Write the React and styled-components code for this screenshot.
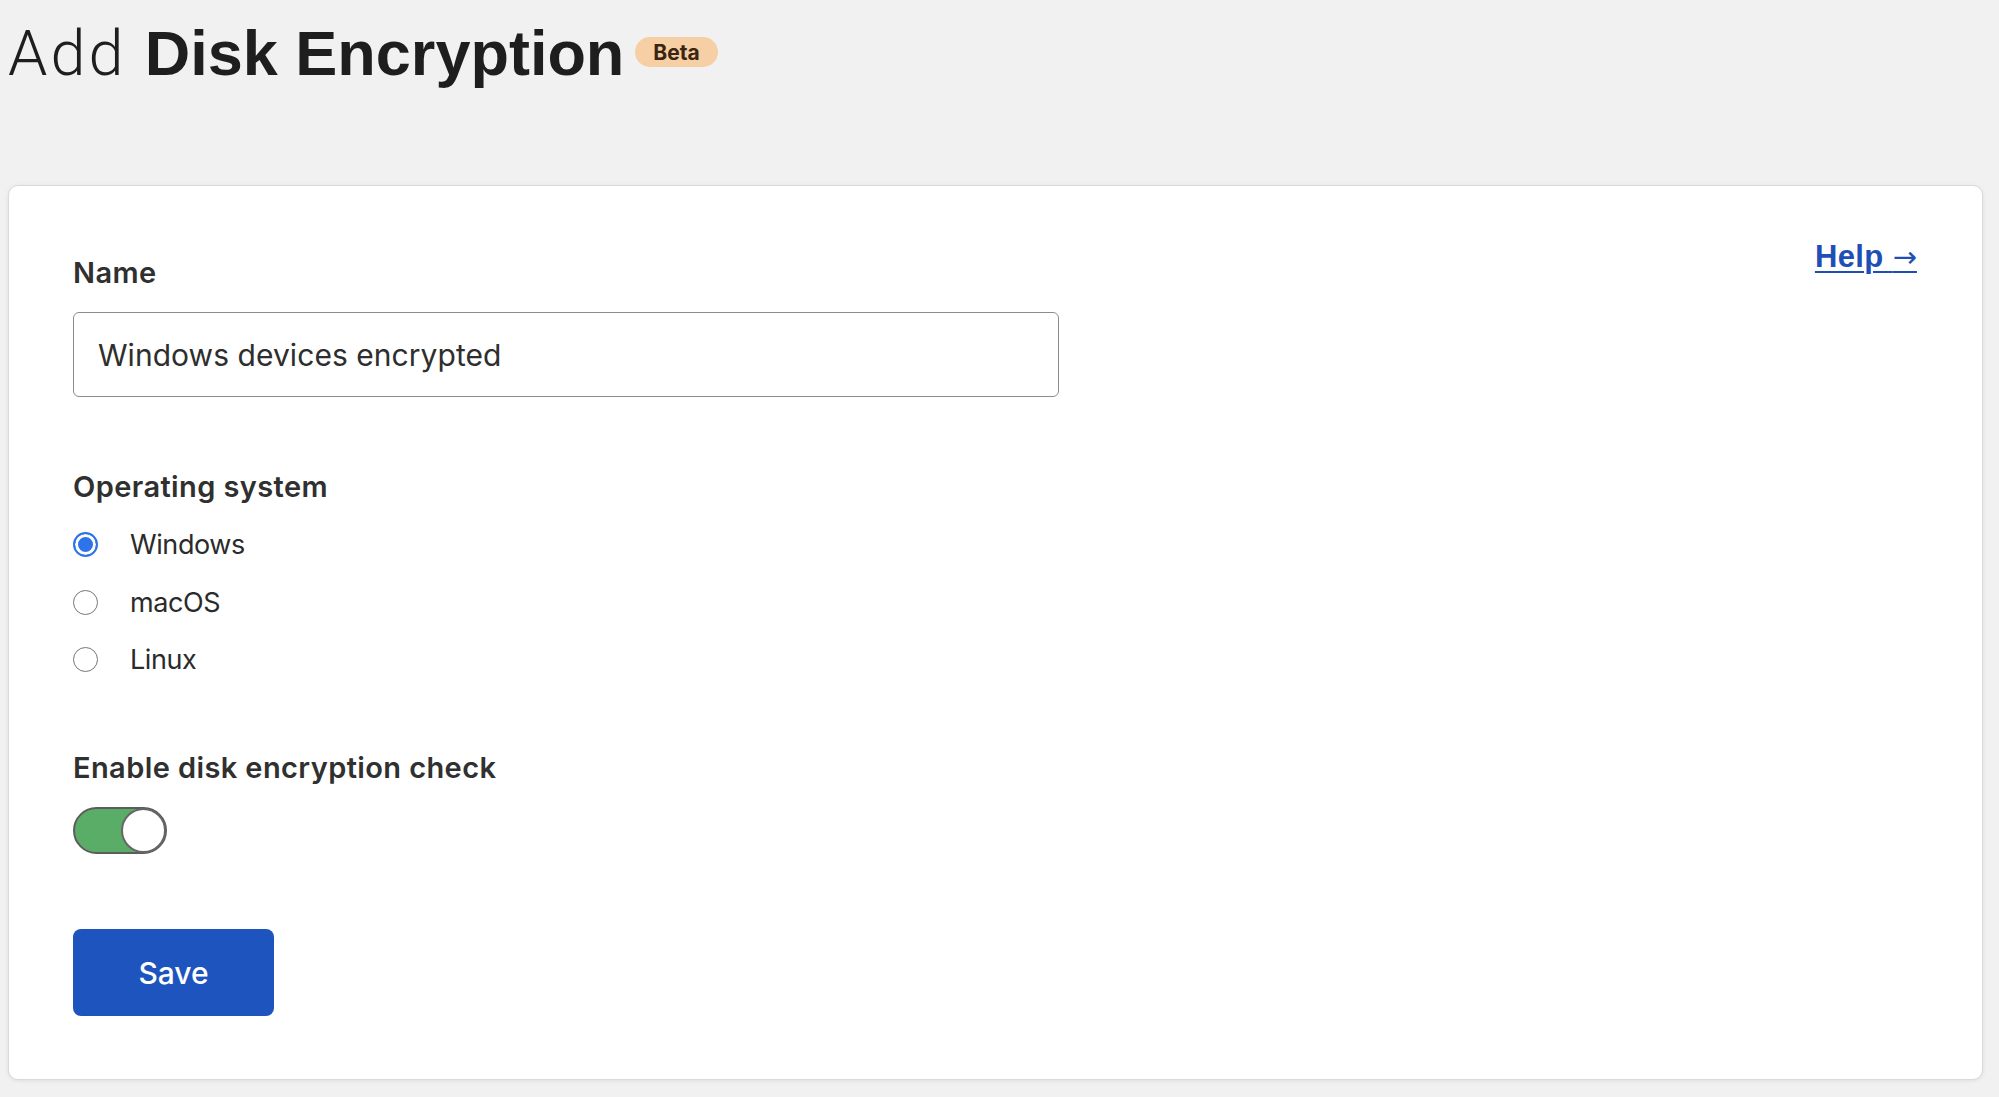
import React, { useState } from 'react';
import styled, { createGlobalStyle } from 'styled-components';

const GlobalStyle = createGlobalStyle`
  html, body {
    margin: 0;
    padding: 0;
    background: #f1f1f1;
  }
  body {
    font-family: Inter, "Noto Sans", sans-serif;
    color: #333;
  }
`;

const Page = styled.div`
  padding: 15px 16px 16px 8px;
`;

const Header = styled.header`
  display: flex;
  align-items: center;
  gap: 11px;
  height: 76px;
`;

const Title = styled.h1`
  margin: 0;
  font-size: 63px;
  line-height: 76px;
  color: #1e1e1e;
  font-weight: 400;
  white-space: nowrap;
`;

const Light = styled.span`
  font-family: Roboto, "Liberation Sans", sans-serif;
  font-weight: 300;
  letter-spacing: 3px;
`;

const Strong = styled.span`
  font-family: "Liberation Sans", Arial, sans-serif;
  font-weight: 700;
`;

const Badge = styled.span`
  display: inline-flex;
  align-items: center;
  justify-content: center;
  height: 30px;
  padding: 0 18px;
  margin-top: -2px;
  border-radius: 15px;
  background: #f6cfa4;
  color: #3b2410;
  font-family: Inter, sans-serif;
  font-weight: 700;
  font-size: 21px;
`;

const Card = styled.section`
  margin-top: 94px;
  background: #fff;
  border: 1px solid #dadada;
  border-radius: 10px;
  box-shadow: 0 1px 4px rgba(0, 0, 0, 0.08);
  padding: 55px 65px 63px 64px;
  display: flex;
  align-items: flex-start;
  justify-content: space-between;
`;

const Form = styled.form`
  display: flex;
  flex-direction: column;
  margin-top: 14px;
`;

const Label = styled.div`
  font-size: 29px;
  line-height: 36px;
  font-weight: 600;
  letter-spacing: 0.4px;
  color: #303030;
  margin-top: ${p => p.$gap || 0}px;
`;

const Input = styled.input`
  box-sizing: border-box;
  width: 986px;
  height: 85px;
  margin-top: 21px;
  padding: 0 24px;
  border: 1.5px solid #8c8c8c;
  border-radius: 6px;
  font-family: Inter, sans-serif;
  font-size: 30px;
  letter-spacing: 0.05px;
  color: #2e2e2e;
  outline: none;
  background: #fff;
`;

const RadioList = styled.div`
  display: flex;
  flex-direction: column;
  gap: 21.5px;
  margin-top: 22px;
`;

const RadioRow = styled.label`
  display: flex;
  align-items: center;
  height: 36px;
  gap: 32px;
  font-size: 27px;
  letter-spacing: -0.4px;
  color: #2b2b2b;
  cursor: pointer;
`;

const RadioDot = styled.span`
  box-sizing: border-box;
  flex-shrink: 0;
  width: 25px;
  height: 25px;
  border-radius: 50%;
  background: ${p => (p.$on ? '#2d74ea' : '#fff')};
  border: ${p => (p.$on ? '2px solid #2d74ea' : '1.5px solid #767676')};
  box-shadow: ${p => (p.$on ? 'inset 0 0 0 3px #fff' : 'none')};
`;

const Toggle = styled.button`
  position: relative;
  box-sizing: border-box;
  width: 94px;
  height: 47px;
  margin-top: 21.5px;
  padding: 0;
  border-radius: 24px;
  border: 2px solid #5c5c5c;
  background: ${p => (p.$on ? '#5aad66' : '#ddd')};
  cursor: pointer;
`;

const Knob = styled.span`
  position: absolute;
  top: -1px;
  left: ${p => (p.$on ? '46px' : '-1px')};
  box-sizing: border-box;
  width: 45px;
  height: 45px;
  border-radius: 50%;
  background: #fff;
  border: 2px solid #666;
`;

const SaveButton = styled.button`
  width: 201px;
  height: 87px;
  margin-top: 75px;
  border: none;
  border-radius: 8px;
  background: #1e54bd;
  color: #fff;
  font-family: Inter, sans-serif;
  font-size: 30px;
  font-weight: 500;
  cursor: pointer;
`;

const HelpLink = styled.a`
  margin-top: 0;
  font-family: "Liberation Sans", Arial, sans-serif;
  font-weight: 700;
  font-size: 31px;
  line-height: 32px;
  color: #1f4fb5;
  text-decoration: underline;
  text-decoration-thickness: 2px;
  text-underline-offset: 4px;
  letter-spacing: 0.4px;
  white-space: nowrap;
`;

const Arrow = styled.span`
  font-family: "DejaVu Sans", sans-serif;
  font-weight: 400;
  font-size: 29px;
  letter-spacing: 0;
`;

const systems = ['Windows', 'macOS', 'Linux'];

export default function App() {
  const [os, setOs] = useState('Windows');
  const [enabled, setEnabled] = useState(true);
  return (
    <Page>
      <GlobalStyle />
      <Header>
        <Title>
          <Light>Add </Light>
          <Strong>Disk Encryption</Strong>
        </Title>
        <Badge>Beta</Badge>
      </Header>
      <Card>
        <Form onSubmit={e => e.preventDefault()}>
          <Label>Name</Label>
          <Input defaultValue="Windows devices encrypted" />
          <Label $gap={71.5}>Operating system</Label>
          <RadioList>
            {systems.map(s => (
              <RadioRow key={s} onClick={() => setOs(s)}>
                <RadioDot $on={os === s} />
                {s}
              </RadioRow>
            ))}
          </RadioList>
          <Label $gap={72}>Enable disk encryption check</Label>
          <Toggle type="button" $on={enabled} onClick={() => setEnabled(v => !v)}>
            <Knob $on={enabled} />
          </Toggle>
          <div>
            <SaveButton type="submit">Save</SaveButton>
          </div>
        </Form>
        <HelpLink href="#">
          Help <Arrow>→</Arrow>
        </HelpLink>
      </Card>
    </Page>
  );
}
